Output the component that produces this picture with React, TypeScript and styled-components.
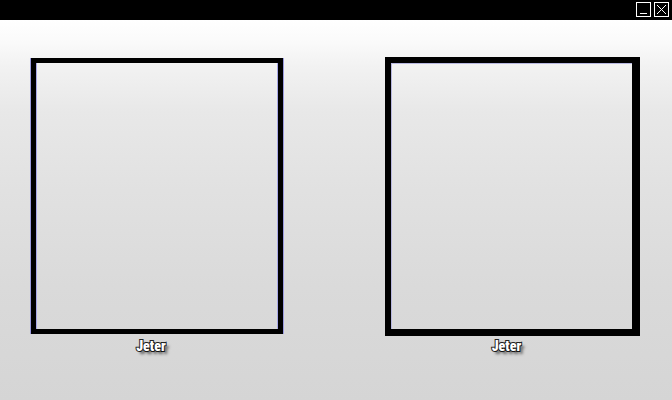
import React from "react";
import styled, { createGlobalStyle } from "styled-components";

const GlobalStyle = createGlobalStyle`
  *, *::before, *::after { box-sizing: border-box; }
  body { margin: 0; }
`;

const Window = styled.div`
  display: flex;
  flex-direction: column;
  min-height: 100vh;
  font-family: Impact, "Roboto Condensed", "DejaVu Sans Condensed", "Liberation Sans", sans-serif;
`;

const TitleBar = styled.header`
  display: flex;
  justify-content: flex-end;
  gap: 3px;
  height: 20px;
  padding: 2px 3px;
  background: #000;
`;

const WindowButton = styled.button`
  display: block;
  width: 15px;
  height: 15px;
  padding: 0;
  border: 1px solid #fff;
  background: #000;
  color: #fff;
  cursor: pointer;

  svg { display: block; }
`;

const Board = styled.main`
  flex: 1;
  display: grid;
  grid-template-columns: 252fr 255fr;
  column-gap: 102px;
  padding: 37px 32px 44px 31px;
  background: linear-gradient(#fff 0, #fafafa 6%, #f2f2f2 12%, #e8e8e8 24%, #e1e1e1 45%, #dadada 70%, #d5d5d5 100%);
`;

const Slot = styled.section`
  display: flex;
  flex-direction: column;
  align-items: center;
`;

const Frame = styled.div<{ $heavy?: boolean }>`
  flex: 1;
  align-self: stretch;
  border: solid #000;
  border-width: ${(p) => (p.$heavy ? "6px 8px 7px 6px" : "5px")};
  margin: ${(p) => (p.$heavy ? "0" : "1px 0 2px")};
  box-shadow: ${(p) =>
    p.$heavy
      ? "inset 1px 1px #b8b8e0"
      : "-1px 0 #9c9ce0, 1px 0 #9c9ce0, inset 1px 0 #a8a8e8, inset -1px 0 #a8a8e8"};
`;

const DiscardButton = styled.button`
  height: 20px;
  margin-right: 12px;
  padding: 0;
  border: 0;
  background: none;
  color: #fff;
  font-family: inherit;
  font-size: 14px;
  font-weight: 900;
  line-height: 18px;
  -webkit-text-stroke: 2px #222;
  paint-order: stroke fill;
  text-shadow: 3px 3px 3px rgba(0, 0, 0, 0.6);
  cursor: pointer;
`;

const slots = [
  { id: "left", heavy: false },
  { id: "right", heavy: true },
];

export default function App() {
  return (
    <Window>
      <GlobalStyle />
      <TitleBar>
        <WindowButton type="button" aria-label="Minimize">
          <svg width="13" height="13" viewBox="0 0 13 13" aria-hidden="true">
            <path d="M3 10.5h7" stroke="currentColor" />
          </svg>
        </WindowButton>
        <WindowButton type="button" aria-label="Close">
          <svg width="13" height="13" viewBox="0 0 13 13" aria-hidden="true">
            <path d="M2 2l9 9M11 2l-9 9" stroke="currentColor" />
          </svg>
        </WindowButton>
      </TitleBar>
      <Board>
        {slots.map((slot) => (
          <Slot key={slot.id}>
            <Frame $heavy={slot.heavy} />
            <DiscardButton type="button">Jeter</DiscardButton>
          </Slot>
        ))}
      </Board>
    </Window>
  );
}
